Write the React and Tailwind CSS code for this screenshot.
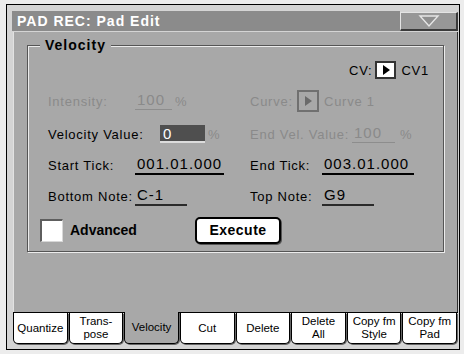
import React from 'react'

const TABS = [
  { label: ['Quantize'] },
  { label: ['Trans-', 'pose'] },
  { label: ['Velocity'], active: true },
  { label: ['Cut'] },
  { label: ['Delete'] },
  { label: ['Delete', 'All'] },
  { label: ['Copy fm', 'Style'] },
  { label: ['Copy fm', 'Pad'] },
]

function Row({ children, className = '' }) {
  return <div className={`grid grid-cols-[202px_1fr] items-center ${className}`}>{children}</div>
}

export default function App() {
  return (
    <div className="w-[464px] h-[354px] bg-[#ececec] pt-[4px] pl-[6px] font-['Liberation_Sans',Arial,sans-serif] text-black">
      <div className="w-[454px] h-[346px] border border-black bg-[#d4d4d4] flex flex-col">
        {/* title row */}
        <div className="flex items-start mt-[6px] pl-[5px] pr-[1px]">
          <div className="flex-1 h-[20px] bg-[#8b8b8b] flex items-center pl-[5px] text-white font-bold text-[14px] tracking-[1px] leading-none">
            PAD REC: Pad Edit
          </div>
          <div className="w-[58px] h-[19px] mt-px bg-[#979797] border-t border-l border-[#e4e4e4] border-r-2 border-b-2 border-r-[#3a3a3a] border-b-[#3a3a3a]">
            <svg width="56" height="16" viewBox="0 0 56 16">
              <polygon points="19,3 37,3 28,13" fill="#8f8f8f" stroke="#e6e6e6" strokeWidth="1.4" />
            </svg>
          </div>
        </div>

        {/* panel */}
        <div className="ml-[6px] mt-px w-[445px] h-[280px] bg-[#a8a8a8] border-l border-l-[#e2e2e2] border-r border-r-[#2e2e2e] pt-[13px] pl-[13px]">
          <div className="relative w-[417px] h-[207px] border border-[#555] shadow-[inset_1px_1px_0_#ececec,1px_1px_0_#ececec] pt-[15px] text-[13px] tracking-[0.75px] leading-none">
            <div className="absolute left-[12px] top-[-8px] px-[5px] bg-[#a8a8a8] font-bold text-[14px] tracking-[1px] leading-[14px]">
              Velocity
            </div>

            {/* CV */}
            <div className="h-[18px] flex items-center justify-end pr-[14px]">
              <span>CV:</span>
              <div className="ml-[3px] w-[21px] h-[18px] bg-white border-2 border-[#333] flex items-center justify-center">
                <svg width="12" height="12" viewBox="0 0 12 12">
                  <polygon points="3,1 10,6 3,11" fill="#000" />
                </svg>
              </div>
              <span className="ml-[5px]">CV1</span>
            </div>

            {/* Intensity / Curve */}
            <Row className="mt-[11px] h-[22px] pl-[20px]">
              <div className="flex items-center text-[#8a8a8a]">
                <span className="w-[87px]">Intensity:</span>
                <span className="w-[37px] pl-[2px] pb-[2px] border-b border-[#8d8d8d] text-[15px] tracking-[1px]">100</span>
                <span className="ml-[3px]">%</span>
              </div>
              <div className="flex items-center text-[#8a8a8a]">
                <span className="w-[47px]">Curve:</span>
                <div className="w-[22px] h-[22px] border-2 border-[#707070] flex items-center justify-center">
                  <svg width="12" height="12" viewBox="0 0 12 12">
                    <polygon points="3,1 10,6 3,11" fill="#6a6a6a" />
                  </svg>
                </div>
                <span className="ml-[5px]">Curve 1</span>
              </div>
            </Row>

            {/* Velocity Value / End Vel */}
            <Row className="mt-[11px] h-[22px] pl-[20px]">
              <div className="flex items-center">
                <span className="w-[112px]">Velocity Value:</span>
                <span className="w-[45px] h-[18px] bg-[#4f4f4f] border-b-2 border-[#dcdcdc] pl-[3px] flex items-center text-white text-[15px]">0</span>
                <span className="ml-[3px] text-[#8a8a8a]">%</span>
              </div>
              <div className="flex items-center text-[#8a8a8a]">
                <span className="w-[102px]">End Vel. Value:</span>
                <span className="w-[43px] pl-[2px] pb-[2px] border-b border-[#8d8d8d] text-[15px] tracking-[1px]">100</span>
                <span className="ml-[5px]">%</span>
              </div>
            </Row>

            {/* Start / End Tick */}
            <Row className="mt-[9px] h-[22px] pl-[20px]">
              <div className="flex items-center">
                <span className="w-[87px]">Start Tick:</span>
                <span className="w-[89px] pl-[2px] pb-[2px] border-b-2 border-black text-[15px] tracking-[1px]">001.01.000</span>
              </div>
              <div className="flex items-center">
                <span className="w-[72px]">End Tick:</span>
                <span className="w-[92px] pl-[2px] pb-[2px] border-b-2 border-black text-[15px] tracking-[1px]">003.01.000</span>
              </div>
            </Row>

            {/* Bottom / Top Note */}
            <Row className="mt-[9px] h-[22px] pl-[20px]">
              <div className="flex items-center">
                <span className="w-[87px]">Bottom Note:</span>
                <span className="w-[52px] pl-[2px] pb-[2px] border-b-2 border-[#2a2a2a] text-[15px] tracking-[1px]">C-1</span>
              </div>
              <div className="flex items-center">
                <span className="w-[72px]">Top Note:</span>
                <span className="w-[52px] pl-[2px] pb-[2px] border-b-2 border-[#2a2a2a] text-[15px] tracking-[1px]">G9</span>
              </div>
            </Row>

            {/* Advanced / Execute */}
            <div className="mt-[9px] h-[28px] pl-[12px] flex items-center">
              <div className="w-[155px] flex items-center">
                <div className="w-[23px] h-[23px] bg-white border-t-2 border-l-2 border-[#5e5e5e] border-r border-b border-r-[#d8d8d8] border-b-[#d8d8d8]" />
                <span className="ml-[7px] font-bold text-[14px] tracking-normal">Advanced</span>
              </div>
              <button className="w-[86px] h-[27px] bg-white border-2 border-black rounded-[5px] shadow-[1px_1px_0_#555] font-bold text-[14px] tracking-[0.5px] flex items-center justify-center">
                Execute
              </button>
            </div>
          </div>
        </div>

        {/* tabs */}
        <div className="ml-[6px] w-[445px] h-[32px] border-t border-black grid grid-cols-8 gap-x-[1px] pr-[1px]">
          {TABS.map((t, i) => (
            <div
              key={i}
              className={`border-x border-b border-black rounded-b-[5px] shadow-[1px_1px_0_#666] flex flex-col items-center justify-center text-[11.5px] leading-[13px] ${
                t.active ? 'bg-[#a8a8a8] -mt-px' : 'bg-white'
              }`}
            >
              {t.label.map((l) => (
                <span key={l}>{l}</span>
              ))}
            </div>
          ))}
        </div>
      </div>
    </div>
  )
}
